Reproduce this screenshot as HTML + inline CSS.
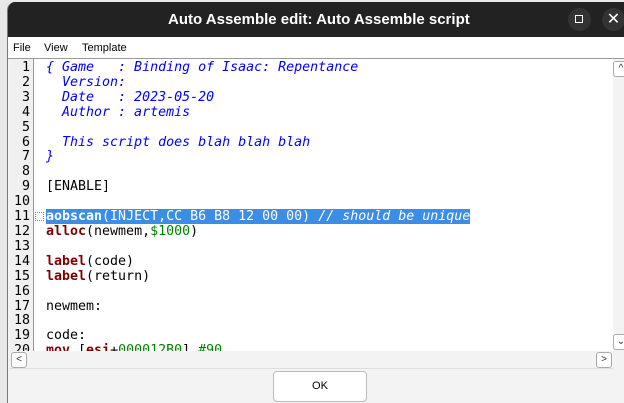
<!DOCTYPE html>
<html style="overflow:hidden;height:403px"><head><style>
body{margin:0;width:624px;height:403px;overflow:hidden;background:#e8e8e8;font-family:"Liberation Sans",sans-serif;position:relative}
.win{position:absolute;left:7px;top:2px;width:617px;height:401px;background:#f3f3f3;border-radius:8px 0 0 0;overflow:hidden;border-left:1px solid #777}
.title{position:absolute;left:0;top:0;right:0;height:35px;background:#222;color:#fff;font-weight:bold;font-size:15px;line-height:35px}
.title span{position:absolute;left:160px}
.btn{position:absolute;top:6px;width:23px;height:23px;border-radius:50%;background:#333}
.menu{position:absolute;top:35px;left:0;right:0;height:21px;background:#fff;font-size:11px;line-height:22px;border-bottom:1px solid #999}
.menu span{position:absolute}
.ed{position:absolute;left:2px;top:57px;width:603px;height:292px;background:#fff;overflow:hidden}
.gut{position:absolute;left:0;top:0;width:23px;height:292px;background:#f0f0f0;border-right:1px solid #999}
pre{margin:0;font-family:"DejaVu Sans Mono",monospace;font-size:13.3px;line-height:14.9px;position:absolute;top:2px}
.ln{left:2px;color:#000;text-align:right;width:18px}
.code{left:36px}
.c{color:#0000ff;font-style:italic}
.k{color:#800000;font-weight:bold}
.n{color:#008000}
.sel{background:#3b8de6;color:#fff}
.sel i{font-style:italic}
.vs{position:absolute;left:605px;top:57px;width:20px;height:292px;background:#f3f3f3}
.arr{position:absolute;width:14px;height:14px;border:1px solid #aaa;border-radius:3px;background:#fff;font-size:10px;line-height:14px;text-align:center;color:#333}
.hs{position:absolute;left:2px;top:349px;width:603px;height:17px;background:#f3f3f3;border-bottom:1px solid #ddd}
.ok{position:absolute;left:265px;top:369px;width:92px;height:29px;border:1px solid #bbb;border-radius:4px;background:#fff;font-size:11px;line-height:29px;text-align:center}
</style></head><body>
<div class="win">
<div class="title"><span>Auto Assemble edit: Auto Assemble script</span>
<div class="btn" style="left:560px"><div style="position:absolute;left:7px;top:7px;width:8px;height:8px;border:1.5px solid #fff;box-sizing:border-box"></div></div>
<div class="btn" style="left:594px;color:#fff;font-weight:normal;font-size:16px;line-height:23px;text-align:center">✕</div>
</div>
<div class="menu"><span style="left:5px">File</span><span style="left:36px">View</span><span style="left:74px">Template</span></div>
<div class="ed"><div class="gut"></div>
<pre class="ln">1
2
3
4
5
6
7
8
9
10
11
12
13
14
15
16
17
18
19
20</pre>
<div style="position:absolute;left:25px;top:153px;width:7px;height:7px;border:1px dotted #888"></div>
<pre class="code"><span class="c">{ Game   : Binding of Isaac: Repentance
  Version:
  Date   : 2023-05-20
  Author : artemis

  This script does blah blah blah
}</span>

[ENABLE]

<span class="sel"><b>aobscan</b>(INJECT,CC B6 B8 12 00 00) <i>// should be unique</i></span>
<span class="k">alloc</span>(newmem,<span class="n">$1000</span>)

<span class="k">label</span>(code)
<span class="k">label</span>(return)

newmem:

code:
<span class="k">mov</span> [<span class="k">esi</span>+<span class="n">000012B0</span>],<span class="n">#90</span></pre>
</div>
<div class="vs"><div class="arr" style="left:0;top:2px">^</div><div class="arr" style="left:0;top:275px">⌄</div></div>
<div class="hs"><div class="arr" style="left:1px;top:1px">&lt;</div><div class="arr" style="left:586px;top:1px">&gt;</div></div>
<div class="ok">OK</div>
</div>
</body></html>
